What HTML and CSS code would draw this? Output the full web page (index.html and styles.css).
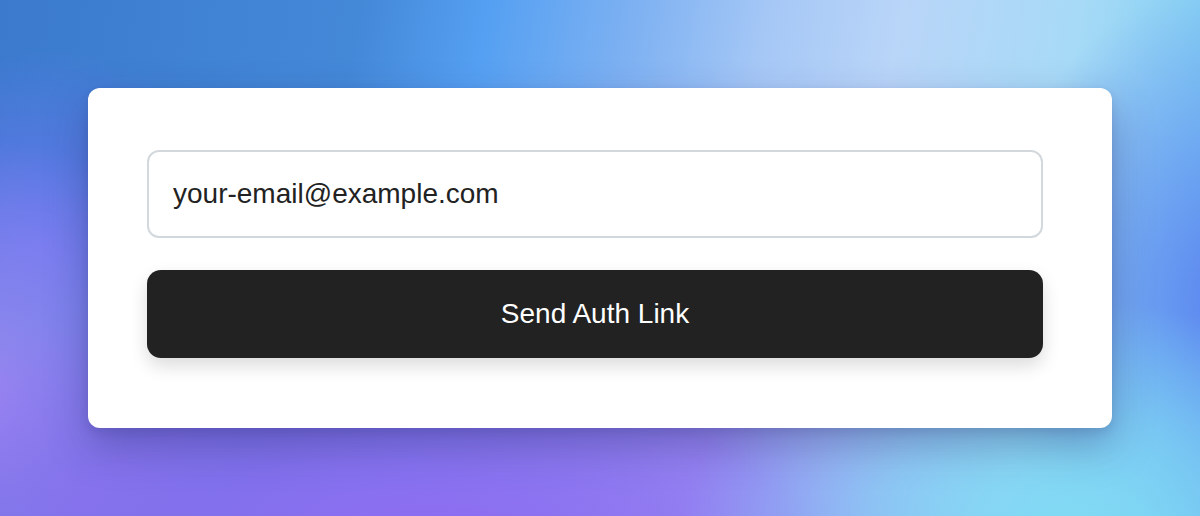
FILE: index.html
```html
<!DOCTYPE html>
<html lang="en">
<head>
<meta charset="utf-8">
<title>Send Auth Link</title>
<link rel="stylesheet" href="styles.css">
</head>
<body>
<main class="stage">
  <form class="card">
    <input class="email" type="email" placeholder="your-email@example.com">
    <button class="send" type="button">Send Auth Link</button>
  </form>
</main>
</body>
</html>
```
FILE: styles.css
```css
* { box-sizing: border-box; }
html, body { margin: 0; padding: 0; height: 100%; }
body {
  font-family: "Liberation Sans", Arial, Helvetica, sans-serif;
  overflow: hidden;
}
.stage {
  width: 100%;
  height: 100%;
  display: flex;
  align-items: center;
  justify-content: center;
  background:
    radial-gradient(ellipse 380px 230px at 1060px 530px, rgba(128,218,244,1) 0%, rgba(128,218,244,0.6) 50%, rgba(128,218,244,0) 100%),
    radial-gradient(ellipse 240px 320px at 1230px 300px, rgba(92,132,240,1) 0%, rgba(92,132,240,0) 100%),
    radial-gradient(ellipse 660px 270px at 430px 540px, rgba(142,108,240,1) 0%, rgba(142,108,240,0.75) 55%, rgba(142,108,240,0) 100%),
    radial-gradient(ellipse 260px 260px at -20px 400px, rgba(158,138,242,1) 0%, rgba(158,138,242,0) 100%),
    radial-gradient(ellipse 220px 200px at 40px 250px, rgba(104,118,238,1) 0%, rgba(104,118,238,0) 100%),
    linear-gradient(100deg, #3b7acd 0%, #4488d8 28%, #55a0f2 38%, #80b2f2 50%, #a6c8f6 60%, #b9d5f8 70%, #a6daf6 84%, #7ccdf2 96%, #6cb4f0 100%);
}
.card {
  width: 1024px;
  height: 340px;
  background: #ffffff;
  border-radius: 12px;
  padding: 62px 69px 70px 59px;
  display: flex;
  flex-direction: column;
  gap: 32px;
  box-shadow: 0 18px 40px rgba(40, 40, 110, 0.35), 0 4px 10px rgba(40, 40, 110, 0.12);
}
.email {
  width: 896px;
  height: 88px;
  border: 2px solid #d3d8dd;
  border-radius: 12px;
  padding: 0 24px;
  font-family: inherit;
  font-size: 28px;
  color: #222;
  background: #fff;
  outline: none;
}
.email::placeholder { color: #222; opacity: 1; }
.send {
  width: 896px;
  height: 88px;
  border: none;
  border-radius: 14px;
  background: #222222;
  color: #ffffff;
  font-family: inherit;
  font-size: 28px;
  box-shadow: 0 8px 18px rgba(0, 0, 0, 0.14);
  cursor: pointer;
}
```
